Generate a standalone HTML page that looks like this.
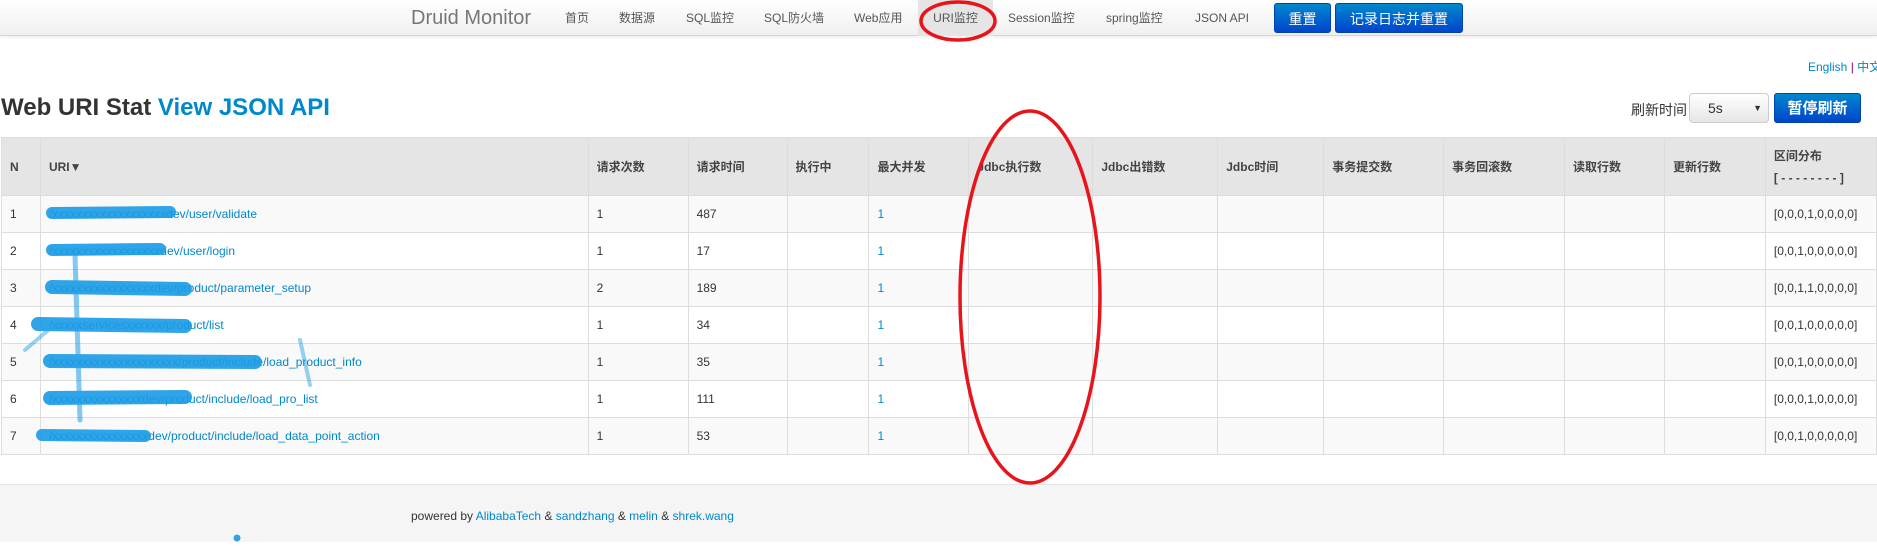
<!DOCTYPE html>
<html><head><meta charset="utf-8">
<style>
*{margin:0;padding:0;box-sizing:border-box}
body{width:1877px;height:550px;overflow:hidden;background:#fff;font-family:"Liberation Sans","Noto Sans CJK SC",sans-serif;font-size:12px;color:#333;position:relative}
.nav{position:absolute;left:0;top:0;width:1877px;height:36px;background:linear-gradient(#fff,#f0f0f0);border-bottom:1px solid #d4d4d4;box-shadow:0 1px 4px rgba(0,0,0,.08)}
.nav span{position:absolute;top:0;line-height:36px;font-size:12px;color:#555}
.brand{font-size:20px!important;color:#777!important}
.act{background:#e5e5e5;}
.btn{position:absolute;top:3px;height:30px;line-height:30px;text-align:center;color:#fff;font-size:14px;background:linear-gradient(#0088cc,#0044cc);border:1px solid #0044aa;border-radius:3px}
a{color:#0088cc;text-decoration:none}
.abs{position:absolute}
table{position:absolute;left:1px;top:137px;border-collapse:collapse;table-layout:fixed}
td,th{border:1px solid #ddd;padding:0 8px;text-align:left;font-size:12px;white-space:nowrap;overflow:hidden}
th{background:#e5e5e5;height:58px;font-weight:bold;color:#444}
td{height:37px;color:#333}
tr.o td{background:#f9f9f9}
.footer{position:absolute;left:0;top:484px;width:1877px;height:58px;background:#f5f5f5;border-top:1px solid #e5e5e5}
</style></head><body>
<div class="nav">
<span class="brand" style="left:411px">Druid Monitor</span>
<span style="left:565px">首页</span>
<span style="left:619px">数据源</span>
<span style="left:686px">SQL监控</span>
<span style="left:764px">SQL防火墙</span>
<span style="left:854px">Web应用</span>
<span class="act" style="left:918px;width:75px;text-align:center">URI监控</span>
<span style="left:1008px">Session监控</span>
<span style="left:1106px">spring监控</span>
<span style="left:1195px">JSON API</span>
<div class="btn" style="left:1274px;width:57px">重置</div>
<div class="btn" style="left:1335px;width:128px">记录日志并重置</div>
</div>
<div class="abs" style="left:1808px;top:58px;font-size:12px;white-space:nowrap"><a>English</a> <span style="color:#808">|</span> <a>中文</a></div>
<div class="abs" style="left:1px;top:94px;font-size:24px;font-weight:bold;color:#333;white-space:nowrap">Web URI Stat <a>View JSON API</a></div>
<div class="abs" style="left:1631px;top:100px;font-size:14px">刷新时间</div>
<div class="abs" style="left:1689px;top:93px;width:80px;height:30px;border:1px solid #ccc;border-radius:4px;background:linear-gradient(#fff,#e6e6e6);font-size:14px;line-height:28px;padding-left:18px">5s<span style="position:absolute;right:6px;font-size:9px">▼</span></div>
<div class="btn" style="left:1774px;top:93px;width:87px;font-weight:bold;font-size:15px">暂停刷新</div>
<table>
<colgroup><col style="width:39px"><col style="width:548px"><col style="width:100px"><col style="width:99px"><col style="width:82px"><col style="width:100px"><col style="width:124px"><col style="width:125px"><col style="width:106px"><col style="width:120px"><col style="width:121px"><col style="width:100px"><col style="width:101px"><col style="width:111px"></colgroup>
<tr><th>N</th><th>URI▼</th><th>请求次数</th><th>请求时间</th><th>执行中</th><th>最大并发</th><th>Jdbc执行数</th><th>Jdbc出错数</th><th>Jdbc时间</th><th>事务提交数</th><th>事务回滚数</th><th>读取行数</th><th>更新行数</th><th style="line-height:22px">区间分布<br>[ - - - - - - - - ]</th></tr>
<tr class="o"><td>1</td><td><a>/xxxxxxxxxxxxxxxxxxxdev/user/validate</a></td><td>1</td><td>487</td><td></td><td><a>1</a></td><td></td><td></td><td></td><td></td><td></td><td></td><td></td><td>[0,0,0,1,0,0,0,0]</td></tr>
<tr><td>2</td><td><a>/xxxxxxxxxxxxxxxxxxdev/user/login</a></td><td>1</td><td>17</td><td></td><td><a>1</a></td><td></td><td></td><td></td><td></td><td></td><td></td><td></td><td>[0,0,1,0,0,0,0,0]</td></tr>
<tr class="o"><td>3</td><td><a>/xxxxxxxxxxxxxxxxxdev/product/parameter_setup</a></td><td>2</td><td>189</td><td></td><td><a>1</a></td><td></td><td></td><td></td><td></td><td></td><td></td><td></td><td>[0,0,1,1,0,0,0,0]</td></tr>
<tr><td>4</td><td><a>/xxxxxservicesxxxxxx/product/list</a></td><td>1</td><td>34</td><td></td><td><a>1</a></td><td></td><td></td><td></td><td></td><td></td><td></td><td></td><td>[0,0,1,0,0,0,0,0]</td></tr>
<tr class="o"><td>5</td><td><a>/xxxxxxxxxxxxxxxxxxxxx/product/include/load_product_info</a></td><td>1</td><td>35</td><td></td><td><a>1</a></td><td></td><td></td><td></td><td></td><td></td><td></td><td></td><td>[0,0,1,0,0,0,0,0]</td></tr>
<tr><td>6</td><td><a>/xxxxxxxxxxxxxxxdev/product/include/load_pro_list</a></td><td>1</td><td>111</td><td></td><td><a>1</a></td><td></td><td></td><td></td><td></td><td></td><td></td><td></td><td>[0,0,0,1,0,0,0,0]</td></tr>
<tr class="o"><td>7</td><td><a>/xxxxxxxxxxxxxxxxdev/product/include/load_data_point_action</a></td><td>1</td><td>53</td><td></td><td><a>1</a></td><td></td><td></td><td></td><td></td><td></td><td></td><td></td><td>[0,0,1,0,0,0,0,0]</td></tr>
</table>
<div class="footer"><div class="abs" style="left:411px;top:24px;font-size:12px">powered by <a>AlibabaTech</a> &amp; <a>sandzhang</a> &amp; <a>melin</a> &amp; <a>shrek.wang</a></div></div>
<svg class="abs" style="left:0;top:0" width="1877" height="550">
<g stroke="#1a9be6" stroke-linecap="round" fill="none" opacity="0.9">
<path d="M52 213 L170 212" stroke-width="12"/>
<path d="M52 250 L160 249" stroke-width="12"/>
<path d="M52 287 L185 289" stroke-width="14"/>
<path d="M38 324 L185 326" stroke-width="14"/>
<path d="M50 361 L255 362" stroke-width="14"/>
<path d="M50 398 L185 397" stroke-width="14"/>
<path d="M42 435 L145 436" stroke-width="12"/>
<path d="M75 255 L80 420" stroke-width="5" opacity=".6"/>
<path d="M25 350 L60 320" stroke-width="4" opacity=".5"/>
<path d="M300 340 L310 385" stroke-width="4" opacity=".5"/>
<circle cx="237" cy="538" r="3" fill="#1a9be6"/>
</g>
<ellipse cx="958" cy="21" rx="37" ry="19" stroke="#e8141c" stroke-width="3.5" fill="none"/>
<ellipse cx="1030" cy="297" rx="70" ry="186" stroke="#e8141c" stroke-width="3.5" fill="none"/>
</svg>
</body></html>
